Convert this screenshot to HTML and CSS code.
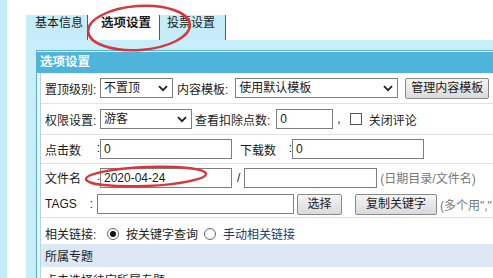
FILE: index.html
```html
<!DOCTYPE html>
<html lang="zh-CN">
<head>
    <meta charset="UTF-8">
    <title>选项设置</title>
    <link rel="stylesheet" href="styles.css">
</head>
<body>
    <div class="page">
        <div class="side"></div>
        <div class="main">
            <!-- 标签页 -->
            <div class="tabs">
                <span class="tab t1">基本信息</span>
                <span class="tab t2 on">选项设置</span>
                <span class="tab t3">投票设置</span>
            </div>

            <div class="panel">
                <div class="box">
                    <div class="box-head">选项设置</div>
                    <div class="form">
                        <div class="row r1 line">
                            <span class="lbl">置顶级别:</span>
                            <span class="sel w73">不置顶<svg viewBox="0 0 10 7"><path d="M1 1.2 5 5.2 9 1.2"/></svg></span>
                            <span class="txt ml4">内容模板:</span>
                            <span class="sel w163 ml7">使用默认模板<svg viewBox="0 0 10 7"><path d="M1 1.2 5 5.2 9 1.2"/></svg></span>
                            <span class="btn w84 ml7">管理内容模板</span>
                        </div>
                        <div class="row r2 line">
                            <span class="lbl">权限设置:</span>
                            <span class="sel w92">游客<svg viewBox="0 0 10 7"><path d="M1 1.2 5 5.2 9 1.2"/></svg></span>
                            <span class="txt ml3">查看扣除点数:</span>
                            <span class="inp w57 ml6">0</span>
                            <span class="txt ml4">,</span>
                            <span class="chk ml9"></span>
                            <span class="txt ml7">关闭评论</span>
                        </div>
                        <div class="row r3 line">
                            <span class="lbl"><i>点击数</i><i>:</i></span>
                            <span class="inp w132">0</span>
                            <span class="lbl2 ml8"><i>下载数</i><i>:</i></span>
                            <span class="inp w132">0</span>
                        </div>
                        <div class="row r4">
                            <span class="lbl"><i>文件名</i><i>:</i></span>
                            <span class="inp w132">2020-04-24</span>
                            <span class="txt ml5">/</span>
                            <span class="inp w133 ml4">&nbsp;</span>
                            <span class="txt gray ml3">(日期目录/文件名)</span>
                        </div>
                        <div class="row r5 line">
                            <span class="lbl tags"><i>TAGS</i><i>:</i></span>
                            <span class="inp w197">&nbsp;</span>
                            <span class="btn w45 ml3">选择</span>
                            <span class="btn w82 ml13">复制关键字</span>
                            <span class="txt gray ml3">(多个用","</span>
                        </div>
                        <div class="row r6">
                            <span class="lbl">相关链接:</span>
                            <span class="radio on ml7"></span>
                            <span class="txt ml7">按关键字查询</span>
                            <span class="radio ml6"></span>
                            <span class="txt navy ml7">手动相关链接</span>
                        </div>
                        <div class="row r7">
                            <span class="txt">所属专题</span>
                        </div>
                        <div class="row r8">
                            <span class="txt">点击选择待定所属专题</span>
                        </div>
                    </div>
                </div>
            </div>
        </div>

        <!-- 红色圈注 -->
        <svg class="marks" viewBox="0 0 493 278">
            <ellipse cx="139" cy="28" rx="51" ry="22" transform="rotate(-4 139 28)"/>
            <ellipse cx="146" cy="176.5" rx="60" ry="9.5" transform="rotate(-2.5 146 176.5)"/>
        </svg>
    </div>
</body>
</html>
```

FILE: styles.css
```css
/* 页面整体 */
html, body {
    margin: 0;
    padding: 0;
    height: 100%;
    overflow: hidden;
}

body {
    background: #fff;
    font-family: "Liberation Sans", "Noto Sans CJK SC", sans-serif;
    font-size: 12px;
    color: #1a1a1a;
}

.page {
    position: relative;
    display: flex;
    height: 100%;
}

.side {
    width: 7px;
    background: #c6ecfa;
    flex: none;
}

.main {
    flex: 1;
    margin-left: 19px;
    overflow: hidden;
}

/* 标签页 */
.tabs {
    display: flex;
    padding-top: 15px;
    height: 25px;
}

.tab {
    box-sizing: border-box;
    height: 25px;
    line-height: 17px;
    background: #c6ecfa;
    border-right: 1px solid #5a5a5a;
    white-space: nowrap;
}

.t1 { width: 62px; padding-left: 9px; }
.t2 { width: 72px; padding-left: 13px; }
.t3 { width: 66px; padding-left: 7px; }

.tab.on {
    background: #fff;
    font-weight: bold;
    font-size: 12.5px;
}

/* 面板 */
.panel {
    background: #c8eefc;
    padding: 10px 0 0 10px;
    height: 300px;
}

.box {
    border-top: 1px solid #5aafcf;
    border-left: 1px solid #5aafcf;
    background: #e6f4fa;
    padding-top: 1px;
    height: 100%;
}

.box-head {
    height: 21px;
    line-height: 21px;
    background: #4eb4dc;
    color: #fff;
    font-weight: bold;
    font-size: 12.5px;
    padding-left: 3px;
    white-space: nowrap;
}

.form {
    margin-left: 3px;
    border-left: 1px solid #b8d4e0;
    background: #fff;
    height: 100%;
}

.row {
    display: flex;
    align-items: center;
    padding-left: 4px;
    white-space: nowrap;
}

.line { border-bottom: 1px solid #e2e2e2; }

.r1 { height: 30px; }
.r2 { height: 30px; }
.r3 { height: 28px; }
.r4 { height: 27px; }
.r5 { height: 26px; }
.r6 { height: 26px; padding-top: 5px; box-sizing: border-box; }
.r7 { height: 23px; background: #dce9f4; }
.r8 { height: 24px; align-items: flex-start; padding-top: 4px; }

.lbl, .lbl2 {
    display: inline-flex;
    justify-content: space-between;
    width: 55px;
    flex: none;
}

.lbl2 { width: 52px; }
.lbl.tags { width: 48px; margin-right: 4px; }

.lbl i, .lbl2 i { font-style: normal; }

.txt { flex: none; }
.gray { color: #777; }
.navy { color: #1c3b6c; }

/* 输入框 */
.inp, .sel {
    box-sizing: border-box;
    height: 20px;
    line-height: 18px;
    border: 1px solid #7e7e7e;
    background: #fff;
    padding-left: 3px;
    flex: none;
}

.sel {
    display: inline-flex;
    align-items: center;
    justify-content: space-between;
    padding-right: 4px;
}

.sel svg {
    width: 10px;
    height: 7px;
    fill: none;
    stroke: #222;
    stroke-width: 1.8;
}

.btn {
    box-sizing: border-box;
    height: 21px;
    line-height: 19px;
    text-align: center;
    border: 1px solid #8a8a8a;
    border-radius: 2px;
    background: linear-gradient(#f5f5f5, #dadada);
    flex: none;
}

.chk {
    width: 12px;
    height: 12px;
    box-sizing: border-box;
    border: 1px solid #555;
    flex: none;
}

.radio {
    width: 12px;
    height: 12px;
    box-sizing: border-box;
    border: 1px solid #666;
    border-radius: 50%;
    background: #fff;
    flex: none;
    display: flex;
    align-items: center;
    justify-content: center;
}

.radio.on::after {
    content: "";
    width: 6px;
    height: 6px;
    border-radius: 50%;
    background: #111;
}

/* 宽度与间距 */
.w45 { width: 45px; }
.w57 { width: 57px; }
.w73 { width: 73px; }
.w82 { width: 82px; }
.w84 { width: 84px; }
.w92 { width: 92px; }
.w132 { width: 132px; }
.w133 { width: 133px; }
.w163 { width: 163px; }
.w197 { width: 197px; }

.ml3 { margin-left: 3px; }
.ml4 { margin-left: 4px; }
.ml5 { margin-left: 5px; }
.ml6 { margin-left: 6px; }
.ml7 { margin-left: 7px; }
.ml8 { margin-left: 8px; }
.ml9 { margin-left: 9px; }
.ml13 { margin-left: 13px; }

/* 红色圈注 */
.marks {
    position: absolute;
    top: 0;
    left: 0;
    width: 493px;
    height: 278px;
    pointer-events: none;
}

.marks ellipse {
    fill: none;
    stroke: #d8363c;
    stroke-width: 2.5;
}
```
